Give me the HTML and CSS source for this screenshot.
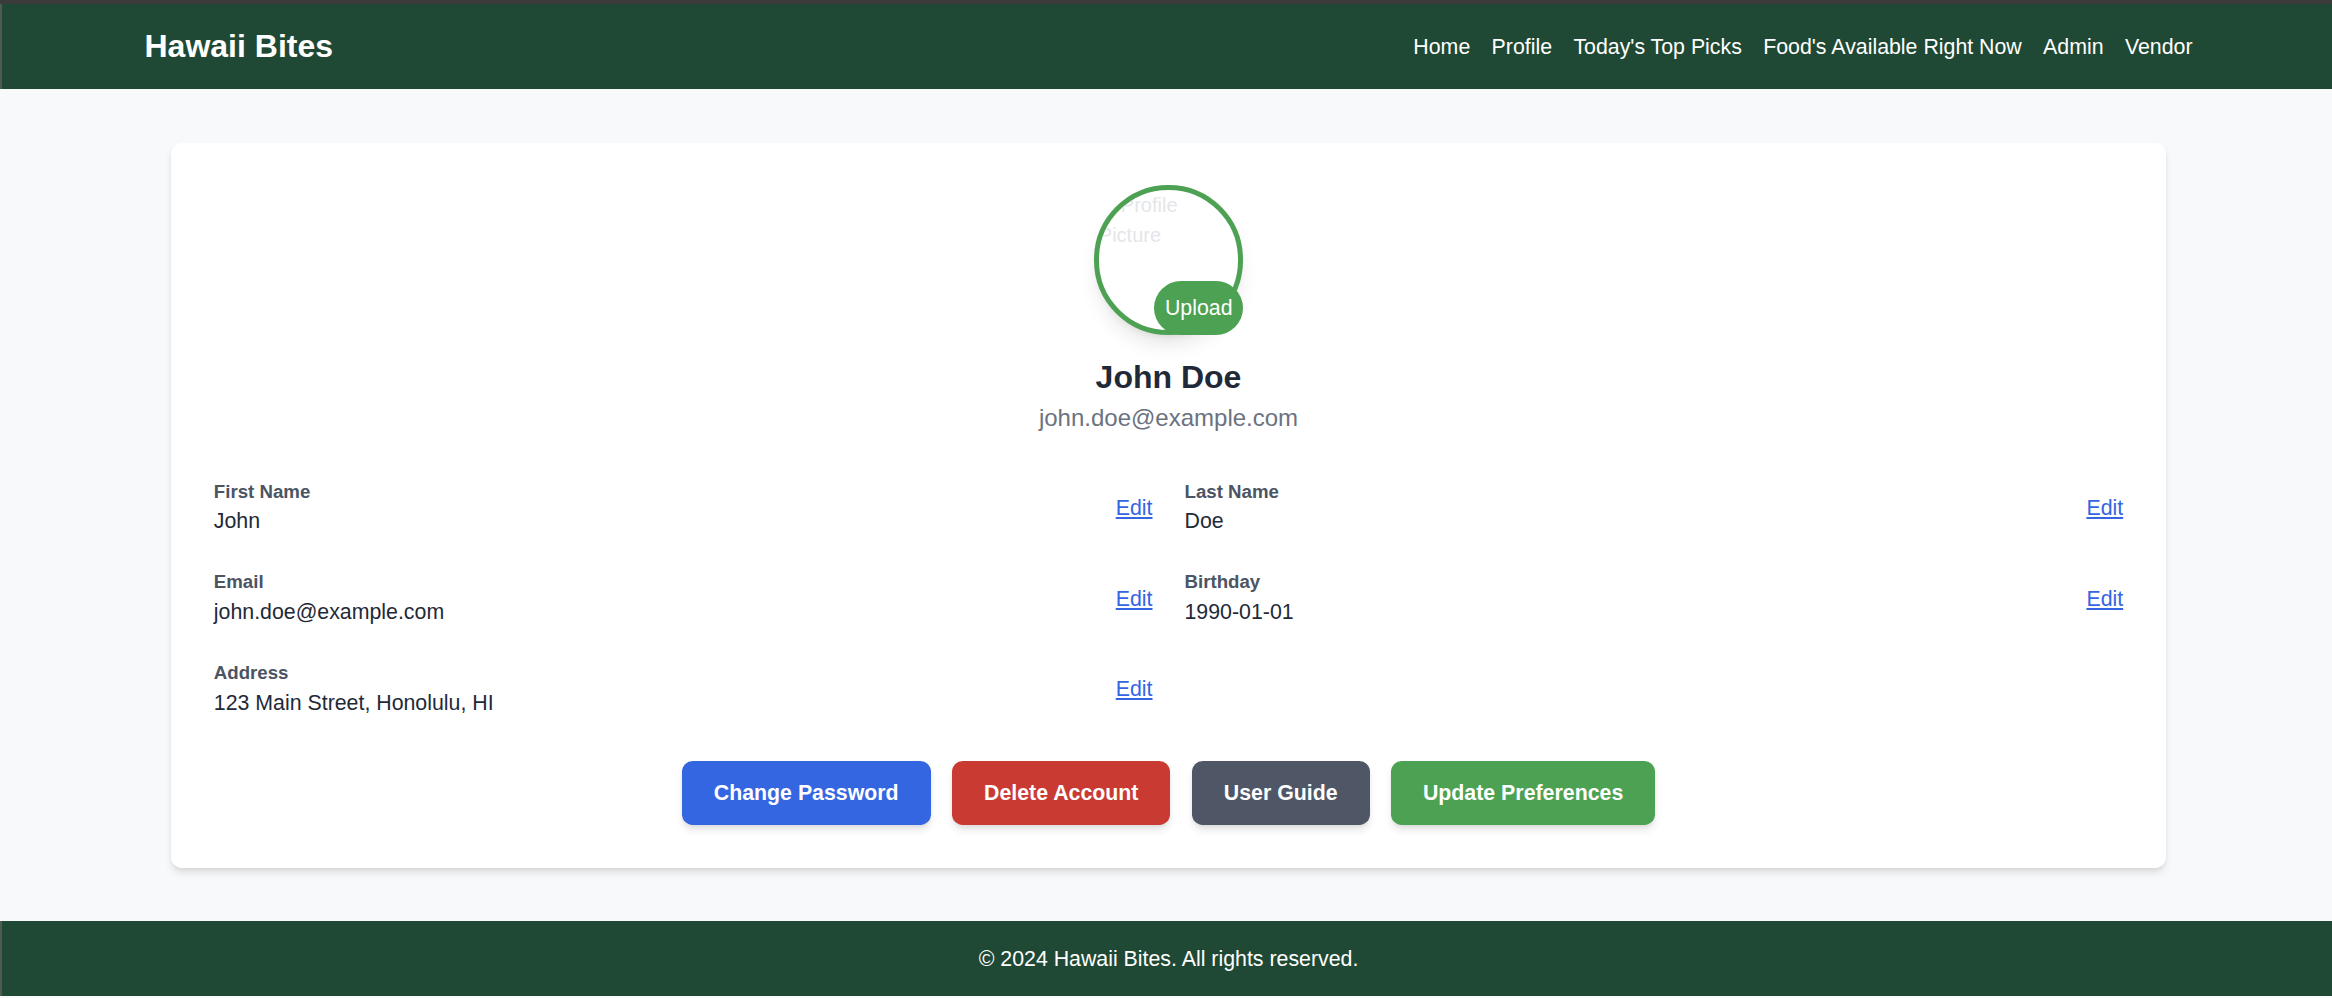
FILE: index.html
```html
<!DOCTYPE html>
<html lang="en">
<head>
<meta charset="utf-8">
<title>Hawaii Bites - Profile</title>
<link rel="stylesheet" href="styles.css">
</head>
<body>
<header class="site-header">
  <div class="header-inner">
    <a class="logo" href="#">Hawaii Bites</a>
    <nav class="nav">
      <a href="#">Home</a>
      <a href="#">Profile</a>
      <a href="#">Today's Top Picks</a>
      <a href="#">Food's Available Right Now</a>
      <a href="#">Admin</a>
      <a href="#">Vendor</a>
    </nav>
  </div>
</header>

<main class="main">
  <section class="card">
    <div class="profile-head">
      <div class="avatar-wrap">
        <div class="avatar">
          <div class="alt-text"><span class="broken-icon"><svg width="16" height="16" viewBox="0 0 16 16"><rect x="1" y="1" width="14" height="14" fill="none" stroke="#c9ccd1" stroke-width="1"/><path d="M3 12l3-4 2 2 2-3 3 5z" fill="#d5d8dc"/></svg></span>Profile<br>Picture</div>
        </div>
        <button class="upload">Upload</button>
      </div>
      <h1 class="name">John Doe</h1>
      <p class="email">john.doe@example.com</p>
    </div>

    <div class="fields">
      <div class="field">
        <div>
          <div class="label">First Name</div>
          <div class="value">John</div>
        </div>
        <a class="edit" href="#">Edit</a>
      </div>
      <div class="field">
        <div>
          <div class="label">Last Name</div>
          <div class="value">Doe</div>
        </div>
        <a class="edit" href="#">Edit</a>
      </div>
      <div class="field">
        <div>
          <div class="label">Email</div>
          <div class="value">john.doe@example.com</div>
        </div>
        <a class="edit" href="#">Edit</a>
      </div>
      <div class="field">
        <div>
          <div class="label">Birthday</div>
          <div class="value">1990-01-01</div>
        </div>
        <a class="edit" href="#">Edit</a>
      </div>
      <div class="field">
        <div>
          <div class="label">Address</div>
          <div class="value">123 Main Street, Honolulu, HI</div>
        </div>
        <a class="edit" href="#">Edit</a>
      </div>
    </div>

    <div class="actions">
      <button class="btn btn-blue">Change Password</button>
      <button class="btn btn-red">Delete Account</button>
      <button class="btn btn-gray">User Guide</button>
      <button class="btn btn-green">Update Preferences</button>
    </div>
  </section>
</main>

<footer class="site-footer">
  <p>© 2024 Hawaii Bites. All rights reserved.</p>
</footer>
</body>
</html>
```

FILE: styles.css
```css
* { box-sizing: border-box; }

body {
  margin: 0;
  font-family: "Liberation Sans", Arial, Helvetica, sans-serif;
  background: #f8f9fb;
  border-top: 4px solid #3b3b3b;
}

.site-header {
  background: #1f4934;
  border-left: 2px solid #4f5c55;
  padding-left: 3px;
}

.header-inner {
  width: 2048px;
  margin: 0 auto;
  padding: 21.33px 0;
  display: flex;
  justify-content: space-between;
  align-items: center;
}

.logo {
  color: #ffffff;
  font-size: 32px;
  line-height: 42.67px;
  font-weight: 700;
  text-decoration: none;
}

.nav {
  display: flex;
  gap: 21.33px;
}

.nav a {
  color: #ffffff;
  font-size: 21.33px;
  line-height: 32px;
  text-decoration: none;
}

.main {
  padding: 53.33px 0 53.33px 5px;
}

.card {
  width: 1994.67px;
  margin: 0 auto;
  background: #ffffff;
  border-radius: 10.67px;
  padding: 42.67px;
  box-shadow: 0 5.33px 8px -1.33px rgba(0, 0, 0, 0.1), 0 2.67px 5.33px -2.67px rgba(0, 0, 0, 0.1);
}

.profile-head {
  text-align: center;
  margin-bottom: 42.67px;
}

.avatar-wrap {
  position: relative;
  width: 149.33px;
  height: 149.33px;
  margin: 0 auto 21.33px;
}

.avatar {
  width: 100%;
  height: 100%;
  border: 5.33px solid #4ca153;
  border-radius: 50%;
  overflow: hidden;
  background: #ffffff;
  text-align: left;
  box-shadow: 0 13.33px 20px -4px rgba(0, 0, 0, 0.1), 0 5.33px 8px -5.33px rgba(0, 0, 0, 0.1);
}

.alt-text {
  font-size: 20px;
  line-height: 30px;
  color: #e4e6e9;
}

.broken-icon {
  display: inline-block;
  width: 16px;
  height: 16px;
  margin: 0 4px 0 2px;
  vertical-align: -2px;
}

.broken-icon svg { display: block; }

.upload {
  position: absolute;
  right: 0;
  bottom: 0;
  background: #4ca153;
  color: #ffffff;
  border: none;
  border-radius: 9999px;
  padding: 10.67px;
  font-family: inherit;
  font-size: 21.33px;
  line-height: 32px;
}

.name {
  margin: 0;
  font-size: 32px;
  line-height: 42.67px;
  font-weight: 700;
  color: #1f2937;
}

.email {
  margin: 0;
  font-size: 24px;
  line-height: 37.33px;
  color: #6b7280;
}

.fields {
  display: grid;
  grid-template-columns: 1fr 1fr;
  column-gap: 32px;
  row-gap: 32px;
}

.field {
  display: flex;
  justify-content: space-between;
  align-items: center;
}

.label {
  font-size: 18.67px;
  line-height: 26.67px;
  font-weight: 700;
  color: #4b5563;
}

.value {
  font-size: 21.33px;
  line-height: 32px;
  color: #1f2937;
}

.edit {
  font-size: 21.33px;
  line-height: 32px;
  color: #3565e0;
  text-decoration: underline;
}

.actions {
  display: flex;
  justify-content: center;
  gap: 21.33px;
  margin-top: 42.67px;
}

.btn {
  border: none;
  border-radius: 10.67px;
  padding: 16px 32px;
  font-family: inherit;
  font-size: 21.33px;
  line-height: 32px;
  font-weight: 700;
  color: #ffffff;
  box-shadow: 0 5.33px 8px -1.33px rgba(0, 0, 0, 0.1), 0 2.67px 5.33px -2.67px rgba(0, 0, 0, 0.1);
}

.btn-blue { background: #3566e1; }
.btn-red { background: #c93a32; }
.btn-gray { background: #4f5666; }
.btn-green { background: #4ca153; }

.site-footer {
  background: #1f4934;
  border-left: 2px solid #4f5c55;
  padding: 21.33px 0 21.33px 3px;
  text-align: center;
}

.site-footer p {
  margin: 0;
  color: #ffffff;
  font-size: 21.33px;
  line-height: 32px;
}
```
